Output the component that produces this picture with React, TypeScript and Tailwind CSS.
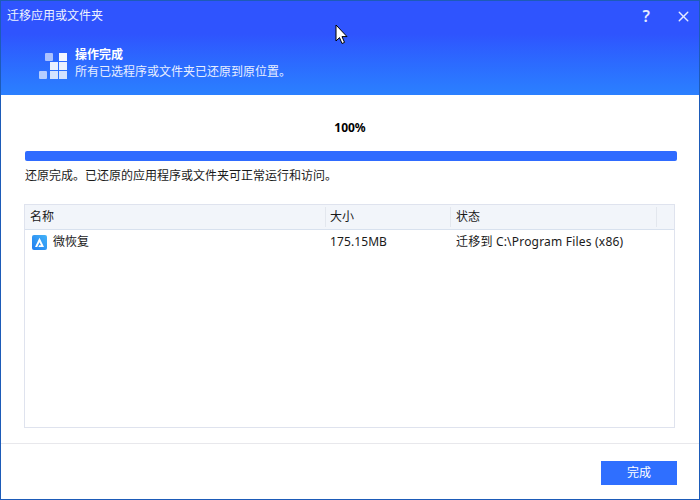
import React from 'react';
import { X } from 'lucide-react';

const font = { fontFamily: '"Noto Sans", "Noto Sans CJK SC", sans-serif' };

// squares logo in the banner
function BlocksIcon() {
  return (
    <svg width="28" height="26" viewBox="0 0 28 26" className="shrink-0">
      <rect x="6" y="0" width="8" height="8" rx="1" fill="#fff" opacity="0.6" />
      <rect x="20" y="0" width="8" height="8" fill="#fff" opacity="0.95" />
      <rect x="11" y="9" width="8" height="8" fill="#fff" opacity="0.9" />
      <rect x="20" y="9" width="8" height="8" fill="#fff" opacity="0.9" />
      <rect x="0" y="18" width="8" height="8" rx="1" fill="#fff" opacity="0.65" />
      <rect x="11" y="18" width="8" height="8" fill="#fff" opacity="0.8" />
      <rect x="20" y="18" width="8" height="8" fill="#fff" opacity="0.8" />
    </svg>
  );
}

function AppIcon() {
  return (
    <svg width="15" height="15" viewBox="0 0 15 15" className="shrink-0">
      <defs>
        <linearGradient id="appBg" x1="0" y1="1" x2="1" y2="0">
          <stop offset="0" stopColor="#1f7cf0" />
          <stop offset="1" stopColor="#45b4f8" />
        </linearGradient>
      </defs>
      <rect width="15" height="15" rx="2" fill="url(#appBg)" />
      <path d="M7.5 2.8 L3 12 H5.2 L7.5 7.2 L9 10.2 H7.2 L6.4 12 H12 Z" fill="#fff" />
    </svg>
  );
}

function Cursor() {
  return (
    <svg width="13" height="21" viewBox="0 0 13 21" className="absolute left-[334px] top-[23px]">
      <path d="M1 1 V17 L4.5 13.6 L7 19.5 L9.5 18.4 L7 12.6 H12 Z" fill="#fff" stroke="#000" strokeWidth="1" />
    </svg>
  );
}

export default function App() {
  return (
    <div style={font} className="relative w-[700px] h-[500px] flex flex-col bg-white border border-[#1d5bb8] overflow-hidden text-[12px] text-[#1a1a1a]">
      <div className="h-[94px] shrink-0 bg-gradient-to-b from-[#2f54fe] via-[#2f54fe] via-[35%] to-[#2b80ff] text-white">
        <div className="flex items-center justify-between h-[30px] pl-[6px] pr-[7px]">
          <span className="text-[#eef2ff]">迁移应用或文件夹</span>
          <div className="flex items-center gap-[25px]">
            <span className="text-[16px] font-semibold text-[#e4eaff]">?</span>
            <X size={17} strokeWidth={2} className="text-[#e4eaff]" />
          </div>
        </div>
        <div className="flex items-start gap-[8px] pl-[38px] pt-[22px]">
          <BlocksIcon />
          <div className="flex flex-col -mt-[6px]">
            <span className="font-bold leading-[16px]">操作完成</span>
            <span className="leading-[17px] text-[#e8eeff]">所有已选程序或文件夹已还原到原位置。</span>
          </div>
        </div>
      </div>

      <div className="flex-1 flex flex-col px-[24px] min-h-0">
        <div className="text-center font-bold leading-[16px] mt-[25px] text-black">100%</div>
        <div className="h-[10px] mt-[15px] w-[652px] bg-[#2f6bff] rounded-[2px]" />
        <div className="mt-[7px] leading-[16px]">还原完成。已还原的应用程序或文件夹可正常运行和访问。</div>

        <div className="mt-[20px] -ml-px h-[224px] w-[651px] border border-[#dfe3ee]">
          <div className="grid grid-cols-[300px_125px_206px_1fr] h-[25px] items-center bg-[#f2f5fa] border-b border-[#d8e1ee]">
            <span className="pl-[5px]">名称</span>
            <span className="pl-[4px] h-[20px] leading-[20px] border-l border-[#e3e7ee]">大小</span>
            <span className="pl-[5px] h-[20px] leading-[20px] border-l border-[#e3e7ee]">状态</span>
            <span className="h-[20px] border-l border-[#e3e7ee]" />
          </div>
          <div className="grid grid-cols-[300px_125px_1fr] h-[24px] items-center">
            <div className="flex items-center gap-[6px] pl-[7px]">
              <AppIcon />
              <span>微恢复</span>
            </div>
            <span className="pl-[5px] tracking-[0.1px]">175.15MB</span>
            <span className="pl-[6px] tracking-[0.2px]">迁移到 C:\Program Files (x86)</span>
          </div>
        </div>
      </div>

      <div className="h-[56px] shrink-0 border-t border-[#e8e8ec] flex items-start justify-end pr-[22px] pt-[17px]">
        <button className="w-[76px] h-[24px] bg-[#2f6fff] text-white text-[12px]">完成</button>
      </div>

      <Cursor />
    </div>
  );
}
